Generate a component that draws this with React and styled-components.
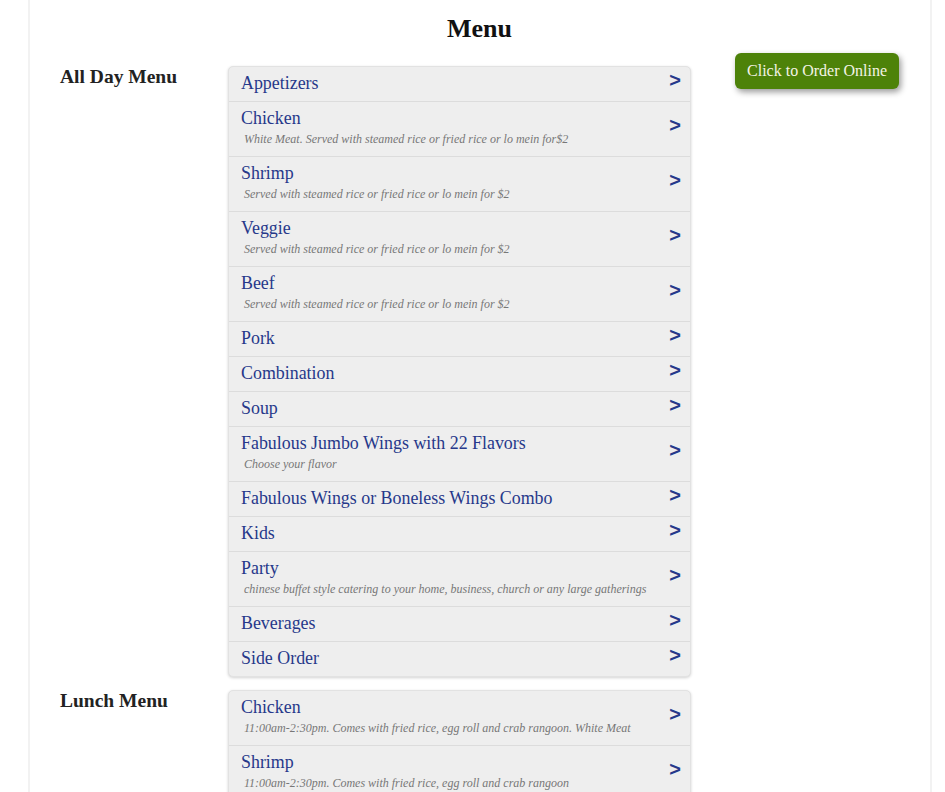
import React from "react";
import styled, { createGlobalStyle } from "styled-components";

const menus = [
  {
    title: "All Day Menu",
    items: [
      { name: "Appetizers" },
      { name: "Chicken", desc: "White Meat. Served with steamed rice or fried rice or lo mein for$2" },
      { name: "Shrimp", desc: "Served with steamed rice or fried rice or lo mein for $2" },
      { name: "Veggie", desc: "Served with steamed rice or fried rice or lo mein for $2" },
      { name: "Beef", desc: "Served with steamed rice or fried rice or lo mein for $2" },
      { name: "Pork" },
      { name: "Combination" },
      { name: "Soup" },
      { name: "Fabulous Jumbo Wings with 22 Flavors", desc: "Choose your flavor" },
      { name: "Fabulous Wings or Boneless Wings Combo" },
      { name: "Kids" },
      { name: "Party", desc: "chinese buffet style catering to your home, business, church or any large gatherings" },
      { name: "Beverages" },
      { name: "Side Order" },
    ],
  },
  {
    title: "Lunch Menu",
    items: [
      { name: "Chicken", desc: "11:00am-2:30pm. Comes with fried rice, egg roll and crab rangoon. White Meat" },
      { name: "Shrimp", desc: "11:00am-2:30pm. Comes with fried rice, egg roll and crab rangoon" },
      { name: "Beef", desc: "11:00am-2:30pm. Comes with fried rice, egg roll and crab rangoon" },
      { name: "Pork", desc: "11:00am-2:30pm. Comes with fried rice, egg roll and crab rangoon" },
    ],
  },
];

const App = () => {
  return (
    <>
      <GlobalStyle />
      <Page>
        <Title>Menu</Title>
        <Body>
          <Main>
            {menus.map((menu) => (
              <Section key={menu.title}>
                <SectionLabel>{menu.title}</SectionLabel>
                <List>
                  {menu.items.map((item, i) => (
                    <Row key={i}>
                      <RowText>
                        <ItemName>{item.name}</ItemName>
                        {item.desc && <ItemDesc>{item.desc}</ItemDesc>}
                      </RowText>
                      <Chevron>&gt;</Chevron>
                    </Row>
                  ))}
                </List>
              </Section>
            ))}
          </Main>
          <Aside>
            <OrderButton>Click to Order Online</OrderButton>
          </Aside>
        </Body>
      </Page>
    </>
  );
};

export default App;

// Styled Components
const GlobalStyle = createGlobalStyle`
  body {
    margin: 0;
    background: #fff;
    font-family: "Liberation Serif", "Times New Roman", serif;
    color: #222;
  }
`;

const Page = styled.div`
  box-sizing: border-box;
  width: 904px;
  min-height: 100vh;
  margin-left: 28px;
  padding: 0 31px 0 30px;
  border-left: 2px solid #f2f2f2;
  border-right: 2px solid #f2f2f2;
`;

const Title = styled.h1`
  margin: 0;
  padding-top: 14px;
  font-size: 26px;
  line-height: 30px;
  font-weight: bold;
  text-align: center;
  color: #111;
`;

const Body = styled.div`
  display: flex;
  margin-top: 9px;
`;

const Main = styled.div`
  width: 631px;
  padding-top: 13px;
`;

const Aside = styled.div`
  flex: 1;
  display: flex;
  justify-content: flex-end;
  align-items: flex-start;
`;

const Section = styled.div`
  display: grid;
  grid-template-columns: 168px 463px;
  align-items: start;
  margin-bottom: 13px;
`;

const SectionLabel = styled.h2`
  margin: 0;
  padding-top: 1px;
  font-size: 19.5px;
  line-height: 20px;
  font-weight: bold;
  color: #222;
`;

const List = styled.div`
  background: #eeeeee;
  border: 1px solid #e2e2e2;
  border-radius: 5px;
  box-shadow: 0 1px 3px rgba(0, 0, 0, 0.18);
  overflow: hidden;
`;

const Row = styled.div`
  display: flex;
  align-items: center;
  padding: 5px 9px 7px 12px;
  border-bottom: 1px solid #dcdcdc;

  &:last-child {
    border-bottom: none;
  }
`;

const RowText = styled.div`
  flex: 1;
`;

const ItemName = styled.div`
  font-size: 17.9px;
  line-height: 22px;
  color: #26388a;
`;

const ItemDesc = styled.div`
  margin: 3px 0 2px 3px;
  font-size: 12px;
  line-height: 15px;
  font-style: italic;
  color: #777;
`;

const Chevron = styled.span`
  margin-top: -6px;
  font-family: "Liberation Sans", Arial, sans-serif;
  font-weight: bold;
  font-size: 20px;
  line-height: 20px;
  color: #26388a;
`;

const OrderButton = styled.button`
  padding: 7px 12px;
  background-color: #4d8209;
  color: #f4f4e6;
  border: none;
  border-radius: 6px;
  font-family: "Liberation Serif", "Times New Roman", serif;
  font-size: 16px;
  line-height: 22px;
  cursor: pointer;
  box-shadow: 2px 3px 6px rgba(0, 0, 0, 0.4);
`;
